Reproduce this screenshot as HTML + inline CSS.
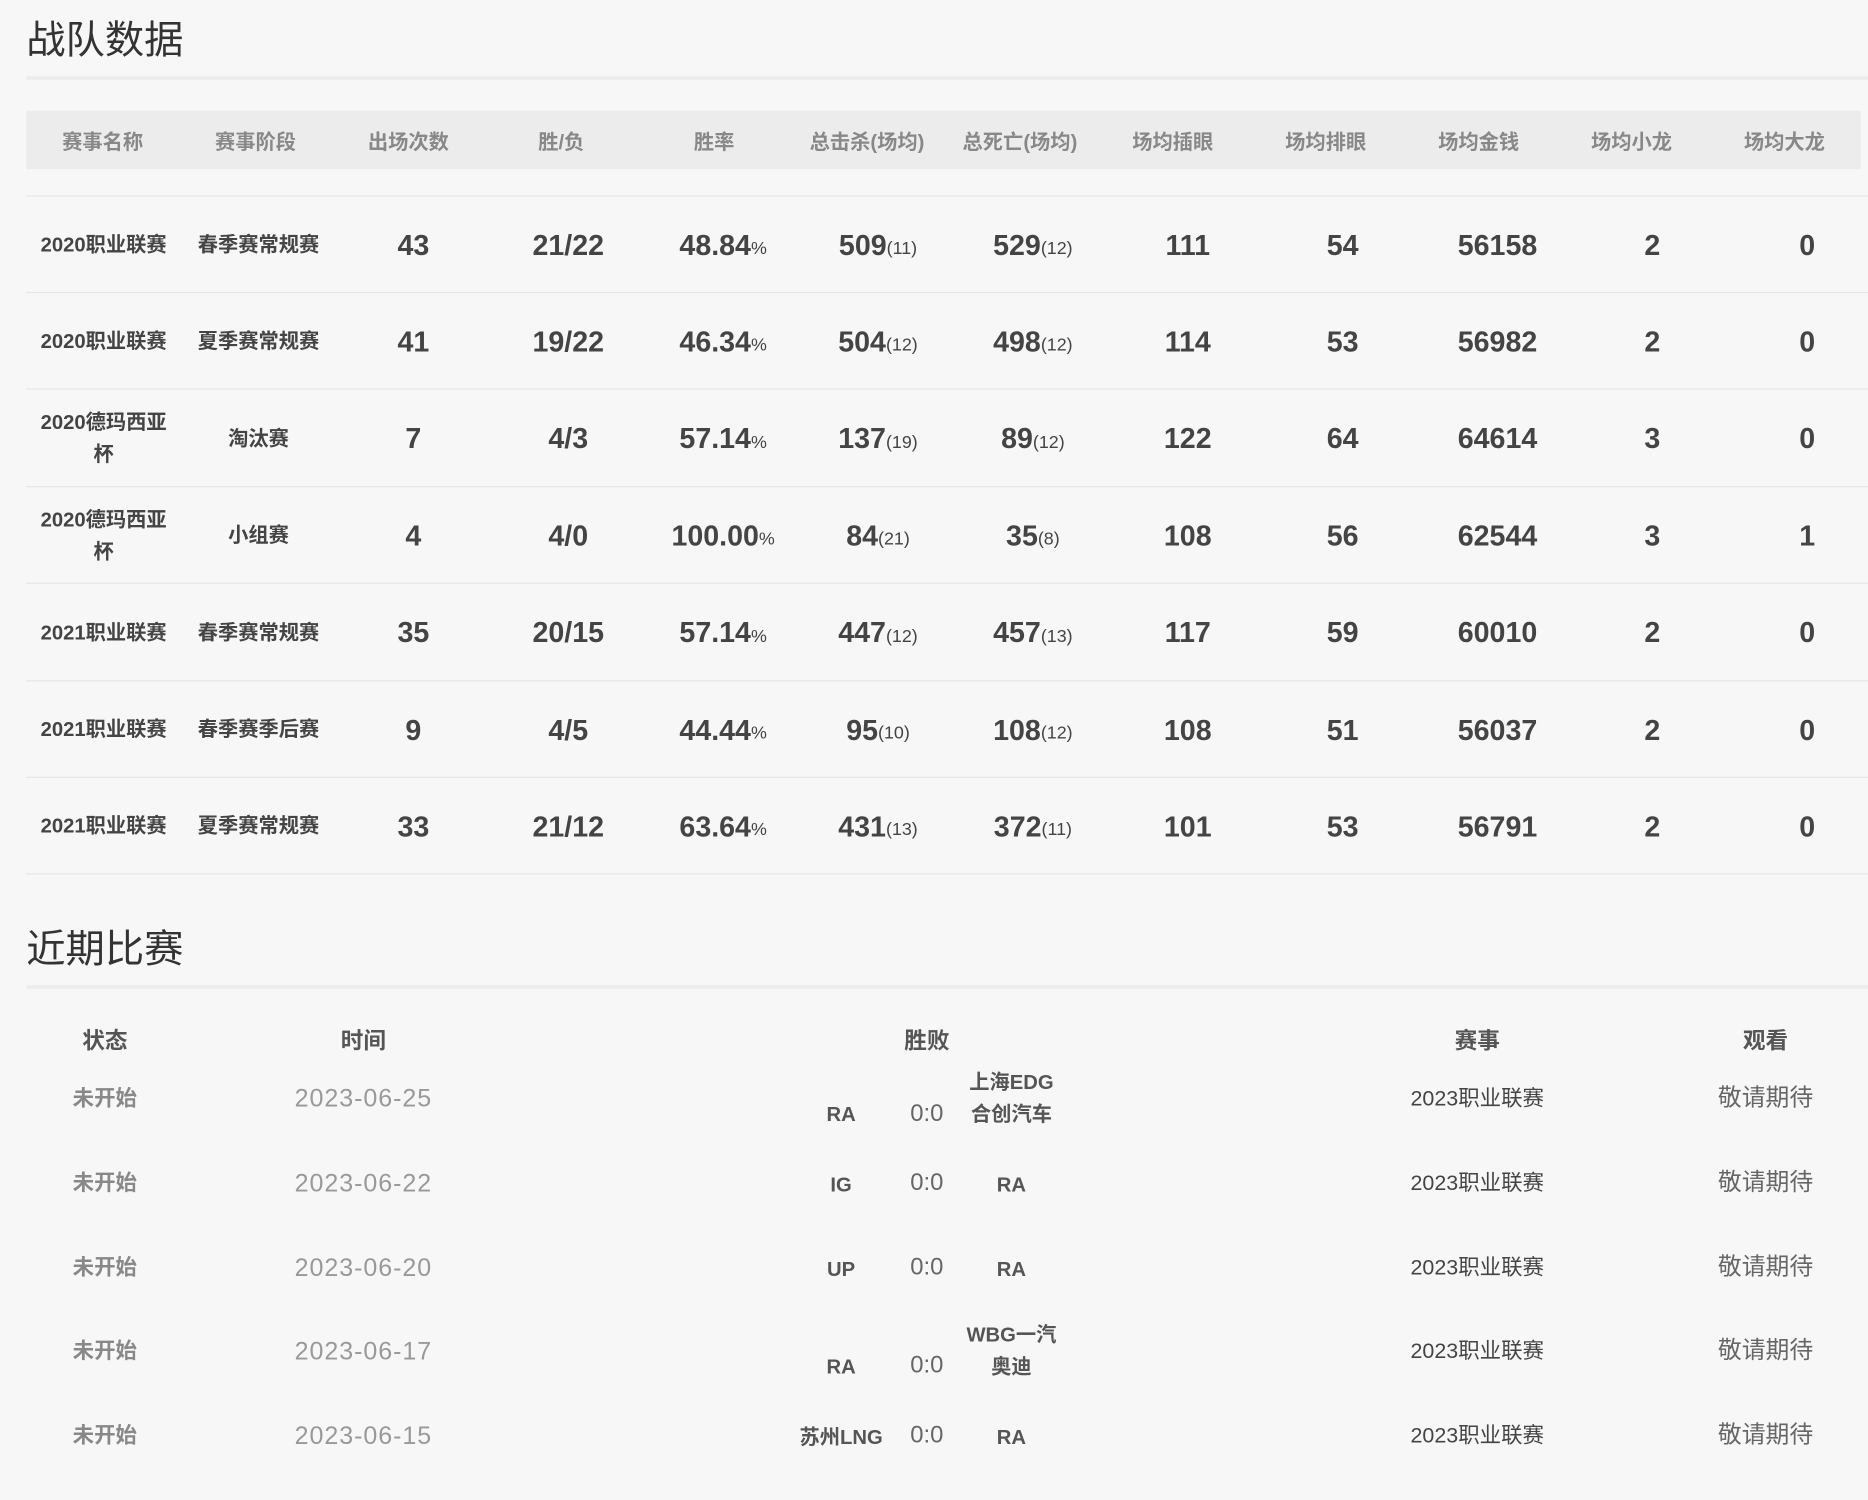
<!DOCTYPE html>
<html><head><meta charset="utf-8"><style>
html,body{margin:0;padding:0;background:#f7f7f7;width:1868px;height:1500px;overflow:hidden}
#w{position:absolute;left:0;top:0;width:1568px;height:1259px;transform:scale(1.19133);transform-origin:0 0;font-family:"Liberation Sans","Noto Sans CJK SC",sans-serif;color:#444}
.t{position:absolute;left:22px;font-size:33px;color:#333;line-height:40px}
.ln{position:absolute;left:22px;width:1546px;height:3px;background:#ececec}
.hd{position:absolute;left:22px;top:93px;width:1540px;height:49px;background:#ececec;display:flex}
.hd div{width:128.33px;display:flex;align-items:center;justify-content:center;font-size:17px;font-weight:bold;color:#888}
.r{position:absolute;left:22px;width:1546px;height:80px;border-bottom:1px solid #e6e6e6;display:flex}
.c{flex:none;width:130px;display:flex;align-items:center;justify-content:center;text-align:center;font-size:24px;font-weight:bold;color:#444;padding-top:3px;box-sizing:border-box}
.c.s{font-size:17px;line-height:27px;color:#444;padding-top:1px}
.c.s span{display:block;width:118px}
.c small{font-size:15px;font-weight:normal;margin-top:4px}
.top{position:absolute;left:22px;top:164px;width:1546px;height:1px;background:#e6e6e6}
.e{position:absolute;transform:translate(-50%,2px);white-space:nowrap;text-align:center;line-height:27px}
.st{font-size:18px;color:#888;font-weight:bold}
.dt{font-size:21px;color:#999;letter-spacing:0.8px}
.tm{font-size:17px;color:#555;font-weight:bold}
.sc{font-size:20px;color:#666}
.ev{font-size:18px;color:#444}
.wt{font-size:20px;color:#666}
.mh{position:absolute;top:859px;font-size:19px;font-weight:bold;color:#555;transform:translateX(-50%)}
</style></head><body><div id="w">
<div class="t" style="top:14px">战队数据</div>
<div class="ln" style="top:64px"></div>
<div class="hd"><div>赛事名称</div><div>赛事阶段</div><div>出场次数</div><div>胜/负</div><div>胜率</div><div>总击杀(场均)</div><div>总死亡(场均)</div><div>场均插眼</div><div>场均排眼</div><div>场均金钱</div><div>场均小龙</div><div>场均大龙</div></div>
<div class="top"></div>

<div class="r" style="top:165px"><div class="c s"><span>2020职业联赛</span></div><div class="c s"><span>春季赛常规赛</span></div><div class="c">43</div><div class="c">21/22</div><div class="c">48.84<small>%</small></div><div class="c">509<small>(11)</small></div><div class="c">529<small>(12)</small></div><div class="c">111</div><div class="c">54</div><div class="c">56158</div><div class="c">2</div><div class="c">0</div></div>
<div class="r" style="top:246.4px"><div class="c s"><span>2020职业联赛</span></div><div class="c s"><span>夏季赛常规赛</span></div><div class="c">41</div><div class="c">19/22</div><div class="c">46.34<small>%</small></div><div class="c">504<small>(12)</small></div><div class="c">498<small>(12)</small></div><div class="c">114</div><div class="c">53</div><div class="c">56982</div><div class="c">2</div><div class="c">0</div></div>
<div class="r" style="top:327.8px"><div class="c s"><span>2020德玛西亚杯</span></div><div class="c s"><span>淘汰赛</span></div><div class="c">7</div><div class="c">4/3</div><div class="c">57.14<small>%</small></div><div class="c">137<small>(19)</small></div><div class="c">89<small>(12)</small></div><div class="c">122</div><div class="c">64</div><div class="c">64614</div><div class="c">3</div><div class="c">0</div></div>
<div class="r" style="top:409.2px"><div class="c s"><span>2020德玛西亚杯</span></div><div class="c s"><span>小组赛</span></div><div class="c">4</div><div class="c">4/0</div><div class="c">100.00<small>%</small></div><div class="c">84<small>(21)</small></div><div class="c">35<small>(8)</small></div><div class="c">108</div><div class="c">56</div><div class="c">62544</div><div class="c">3</div><div class="c">1</div></div>
<div class="r" style="top:490.6px"><div class="c s"><span>2021职业联赛</span></div><div class="c s"><span>春季赛常规赛</span></div><div class="c">35</div><div class="c">20/15</div><div class="c">57.14<small>%</small></div><div class="c">447<small>(12)</small></div><div class="c">457<small>(13)</small></div><div class="c">117</div><div class="c">59</div><div class="c">60010</div><div class="c">2</div><div class="c">0</div></div>
<div class="r" style="top:572px"><div class="c s"><span>2021职业联赛</span></div><div class="c s"><span>春季赛季后赛</span></div><div class="c">9</div><div class="c">4/5</div><div class="c">44.44<small>%</small></div><div class="c">95<small>(10)</small></div><div class="c">108<small>(12)</small></div><div class="c">108</div><div class="c">51</div><div class="c">56037</div><div class="c">2</div><div class="c">0</div></div>
<div class="r" style="top:653.4px"><div class="c s"><span>2021职业联赛</span></div><div class="c s"><span>夏季赛常规赛</span></div><div class="c">33</div><div class="c">21/12</div><div class="c">63.64<small>%</small></div><div class="c">431<small>(13)</small></div><div class="c">372<small>(11)</small></div><div class="c">101</div><div class="c">53</div><div class="c">56791</div><div class="c">2</div><div class="c">0</div></div>

<div class="t" style="top:777px">近期比赛</div>
<div class="ln" style="top:827px"></div>
<div class="mh" style="left:88px">状态</div>
<div class="mh" style="left:305px">时间</div>
<div class="mh" style="left:778px">胜败</div>
<div class="mh" style="left:1240px">赛事</div>
<div class="mh" style="left:1482px">观看</div>

<div class="e st" style="left:88px;top:907px">未开始</div><div class="e dt" style="left:305px;top:907px">2023-06-25</div>
<div class="e tm" style="left:706px;top:920px">RA</div><div class="e sc" style="left:778px;top:920px">0:0</div>
<div class="e tm" style="left:849px;top:893px">上海EDG<br>合创汽车</div>
<div class="e ev" style="left:1240px;top:907px">2023职业联赛</div><div class="e wt" style="left:1482px;top:907px">敬请期待</div>

<div class="e st" style="left:88px;top:978px">未开始</div><div class="e dt" style="left:305px;top:978px">2023-06-22</div>
<div class="e tm" style="left:706px;top:979px">IG</div><div class="e sc" style="left:778px;top:978px">0:0</div>
<div class="e tm" style="left:849px;top:979px">RA</div>
<div class="e ev" style="left:1240px;top:978px">2023职业联赛</div><div class="e wt" style="left:1482px;top:978px">敬请期待</div>

<div class="e st" style="left:88px;top:1049px">未开始</div><div class="e dt" style="left:305px;top:1049px">2023-06-20</div>
<div class="e tm" style="left:706px;top:1050px">UP</div><div class="e sc" style="left:778px;top:1049px">0:0</div>
<div class="e tm" style="left:849px;top:1050px">RA</div>
<div class="e ev" style="left:1240px;top:1049px">2023职业联赛</div><div class="e wt" style="left:1482px;top:1049px">敬请期待</div>

<div class="e st" style="left:88px;top:1119px">未开始</div><div class="e dt" style="left:305px;top:1119px">2023-06-17</div>
<div class="e tm" style="left:706px;top:1132px">RA</div><div class="e sc" style="left:778px;top:1131px">0:0</div>
<div class="e tm" style="left:849px;top:1105px">WBG一汽<br>奥迪</div>
<div class="e ev" style="left:1240px;top:1119px">2023职业联赛</div><div class="e wt" style="left:1482px;top:1119px">敬请期待</div>

<div class="e st" style="left:88px;top:1190px">未开始</div><div class="e dt" style="left:305px;top:1190px">2023-06-15</div>
<div class="e tm" style="left:706px;top:1191px">苏州LNG</div><div class="e sc" style="left:778px;top:1190px">0:0</div>
<div class="e tm" style="left:849px;top:1191px">RA</div>
<div class="e ev" style="left:1240px;top:1190px">2023职业联赛</div><div class="e wt" style="left:1482px;top:1190px">敬请期待</div>
</div></body></html>
